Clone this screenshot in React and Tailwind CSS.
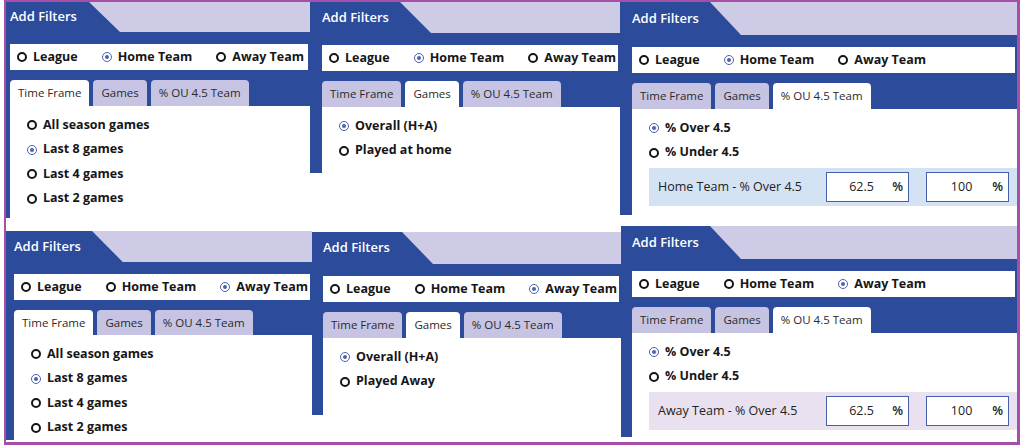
import React from "react";

const scopes = ["League", "Home Team", "Away Team"];
const tabs = ["Time Frame", "Games", "% OU 4.5 Team"];

// small round radio, checked ones are the thin blue ring with a dot
const Radio = ({ checked }) =>
  checked ? (
    <span className="flex h-[10px] w-[10px] shrink-0 items-center justify-center rounded-full border-[1.5px] border-[#4b63ab]">
      <span className="h-[4px] w-[4px] rounded-full bg-[#4b63ab]" />
    </span>
  ) : (
    <span className="h-[10px] w-[10px] shrink-0 rounded-full border-2 border-[#151515]" />
  );

const Option = ({ checked, children }) => (
  <div className="flex h-[24.5px] items-center gap-[6px] text-[12.5px] font-bold text-[#161616]">
    <Radio checked={checked} />
    <span>{children}</span>
  </div>
);

const ValueBox = ({ value }) => (
  <div className="flex h-[30px] w-[83px] items-center border border-[#4560a8] bg-white text-[12.5px] text-[#222]">
    <span className="flex-1 pl-[4px] text-center">{value}</span>
    <span className="pr-[5px] font-semibold">%</span>
  </div>
);

const RangeRow = ({ label, tone }) => (
  <div className={`mt-[3px] flex h-[38px] items-center pl-[9px] pr-[8px] ${tone}`}>
    <span className="text-[12.5px] font-medium text-[#222]">{label}</span>
    <div className="ml-auto flex gap-[17px]">
      <ValueBox value="62.5" />
      <ValueBox value="100" />
    </div>
  </div>
);

const Panel = ({ box, textPad, edge, headH, tabW, scope, tab, children }) => (
  <div className={`flex shrink-0 flex-col bg-[#2c4b9b] ${box}`}>
    {/* header: blue tab with a slanted edge into the lavender strip */}
    <div className={`flex ${headH}`}>
      <div
        className={`flex items-center ${tabW} ${textPad} text-[13px] font-semibold text-white`}
      >
        Add Filters
      </div>
      <div className="flex-1 bg-[#cdcbe6] [clip-path:polygon(0_0,100%_0,100%_100%,31px_100%)]" />
    </div>

    {/* scope radios */}
    <div
      className={`mt-[12px] mr-[2px] flex h-[26px] items-center gap-[24px] bg-white pl-[7px] ${edge}`}
    >
      {scopes.map((s, i) => (
        <div
          key={s}
          className="flex items-center gap-[6px] text-[12.5px] font-bold text-[#161616]"
        >
          <Radio checked={i === scope} />
          <span>{s}</span>
        </div>
      ))}
    </div>

    {/* tabs */}
    <div className={`mt-[10px] flex h-[26px] gap-[4px] ${edge}`}>
      {tabs.map((t, i) => (
        <div
          key={t}
          className={`flex items-center rounded-t-[4px] px-[8px] text-[11.5px] font-medium text-[#2a2a2a] ${
            i === tab ? "bg-white" : "bg-[#c6c4e2]"
          }`}
        >
          {t}
        </div>
      ))}
    </div>

    {/* tab body */}
    <div className={`flex-1 bg-white ${edge}`}>
      <div className="flex flex-col pt-[7px] pl-[17px]">{children}</div>
    </div>
  </div>
);

const TimeFrame = () => (
  <>
    <Option>All season games</Option>
    <Option checked>Last 8 games</Option>
    <Option>Last 4 games</Option>
    <Option>Last 2 games</Option>
  </>
);

const App = () => {
  return (
    <div className="h-[447px] w-[1024px] overflow-hidden bg-white font-['Open_Sans','Liberation_Sans',sans-serif]">
      <div className="ml-[4px] flex h-[445px] w-[1016px] flex-col border-2 border-r-[3px] border-b-[3px] border-[#a54fa8]">
        {/* Home team row */}
        <div className="flex h-[224px] items-start">
          <Panel
            box="w-[304px] h-[216px]"
            textPad="pl-[4px]"
            edge="ml-[4px]"
            headH="h-[30px]"
            tabW="w-[83px]"
            scope={1}
            tab={0}
          >
            <TimeFrame />
          </Panel>
          <Panel
            box="w-[310px] h-[171px]"
            textPad="pl-[12px]"
            edge="ml-[12px]"
            headH="h-[31px]"
            tabW="w-[90px]"
            scope={1}
            tab={1}
          >
            <Option checked>Overall (H+A)</Option>
            <Option>Played at home</Option>
          </Panel>
          <Panel
            box="w-[397px] h-[213px]"
            textPad="pl-[12px]"
            edge="ml-[12px]"
            headH="h-[33px]"
            tabW="w-[90px]"
            scope={1}
            tab={2}
          >
            <Option checked>% Over 4.5</Option>
            <Option>% Under 4.5</Option>
            <RangeRow label="Home Team - % Over 4.5" tone="bg-[#d4e3f4]" />
          </Panel>
        </div>

        {/* Away team row */}
        <div className="flex items-start">
          <Panel
            box="w-[306px] h-[209px] mt-[5px]"
            textPad="pl-[8px]"
            edge="ml-[8px]"
            headH="h-[32px]"
            tabW="w-[86px]"
            scope={2}
            tab={0}
          >
            <TimeFrame />
          </Panel>
          <Panel
            box="w-[309px] h-[183px] mt-[6px]"
            textPad="pl-[11px]"
            edge="ml-[11px]"
            headH="h-[32px]"
            tabW="w-[90px]"
            scope={2}
            tab={1}
          >
            <Option checked>Overall (H+A)</Option>
            <Option>Played Away</Option>
          </Panel>
          <Panel
            box="w-[396px] h-[211px]"
            textPad="pl-[11px]"
            edge="ml-[11px]"
            headH="h-[33px]"
            tabW="w-[89px]"
            scope={2}
            tab={2}
          >
            <Option checked>% Over 4.5</Option>
            <Option>% Under 4.5</Option>
            <RangeRow label="Away Team - % Over 4.5" tone="bg-[#e9e1f0]" />
          </Panel>
        </div>
      </div>
    </div>
  );
};

export default App;
